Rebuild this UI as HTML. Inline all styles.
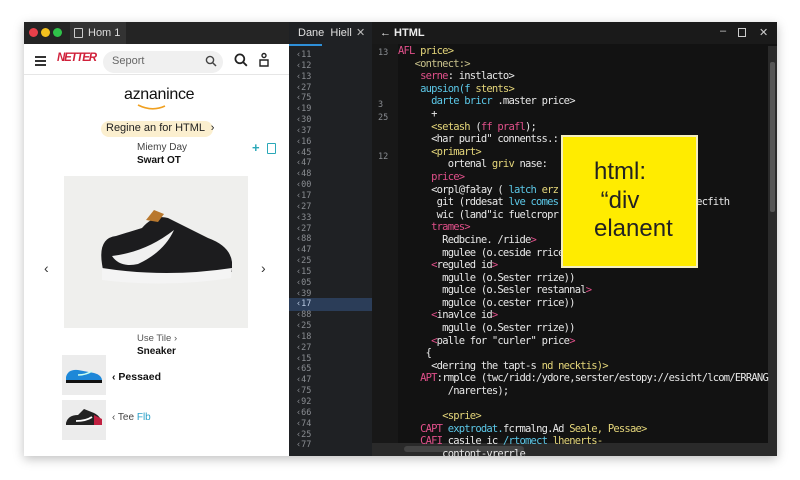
<!DOCTYPE html>
<html><head><meta charset="utf-8"><style>
*{margin:0;padding:0;box-sizing:border-box}
body{width:800px;height:480px;background:#fff;position:relative;overflow:hidden;font-family:"Liberation Sans",sans-serif}
.a{position:absolute;white-space:nowrap}
#win{position:absolute;left:24px;top:22px;width:753px;height:434px;background:#121212;box-shadow:0 3px 10px rgba(0,0,0,.25);overflow:hidden}
.code{font-family:"DejaVu Sans Mono","Liberation Mono",monospace;font-size:10.5px;letter-spacing:-0.8px;color:#e8e8e8}
.p{color:#e0508a}.y{color:#e5d67a}.b{color:#5cc8e8}.g{color:#c7c08a}
.ln{font-family:"DejaVu Sans Mono",monospace;font-size:8.5px;color:#8a8d92}
</style></head><body>
<div id="win">
 <div class="a" style="left:0;top:0;width:265px;height:22px;background:#242424"></div>
 <div class="a" style="left:5px;top:6px;width:9px;height:9px;border-radius:50%;background:#e8404a"></div>
 <div class="a" style="left:17px;top:6px;width:9px;height:9px;border-radius:50%;background:#f2c01e"></div>
 <div class="a" style="left:29px;top:6px;width:9px;height:9px;border-radius:50%;background:#2fc24a"></div>
 <div class="a" style="left:46px;top:0;width:56px;height:22px;background:#333"></div>
 <div class="a" style="left:50px;top:6px;width:9px;height:10px;border:1px solid #ccc;border-radius:1px"></div>
 <div class="a" style="left:64px;top:5px;font-size:11px;color:#ddd">Hom 1</div>
 <div class="a" style="left:0;top:22px;width:265px;height:412px;background:#fff"></div>
 <div class="a" style="left:0;top:52px;width:265px;height:1px;background:#e6e6e6"></div>
 <div class="a" style="left:11px;top:34px;width:11px;height:2px;background:#333;box-shadow:0 4px 0 #333,0 8px 0 #333"></div>
 <div class="a" style="left:33px;top:30px;font-size:11.5px;font-weight:bold;font-style:italic;color:#d0203a;letter-spacing:-1.2px">NETTER</div>
 <div class="a" style="left:79px;top:29px;width:120px;height:22px;border-radius:11px;background:#f0f0f0"></div>
 <div class="a" style="left:88px;top:33px;font-size:11px;color:#666">Seport</div>
 <svg class="a" style="left:181px;top:33px" width="12" height="12" viewBox="0 0 12 12"><circle cx="5" cy="5" r="3.6" fill="none" stroke="#444" stroke-width="1.4"/><path d="M7.6 7.6L11 11" stroke="#444" stroke-width="1.5"/></svg>
 <svg class="a" style="left:210px;top:31px" width="14" height="14" viewBox="0 0 12 12"><circle cx="5" cy="5" r="3.8" fill="none" stroke="#222" stroke-width="1.5"/><path d="M7.8 7.8L11 11" stroke="#222" stroke-width="1.6"/></svg>
 <svg class="a" style="left:234px;top:30px" width="12" height="15" viewBox="0 0 12 15"><circle cx="6" cy="3.5" r="2" fill="none" stroke="#222" stroke-width="1.4"/><path d="M2 14V8h8v6z" fill="none" stroke="#222" stroke-width="1.4"/></svg>
 <div class="a" style="left:100px;top:64px;font-size:16px;color:#111;letter-spacing:-.3px">aznanince</div>
 <svg class="a" style="left:113px;top:82px" width="30" height="7" viewBox="0 0 30 7"><path d="M1 1Q15 8 28 2" fill="none" stroke="#f0a020" stroke-width="1.6"/></svg>
 <div class="a" style="left:77px;top:99px;width:112px;height:16px;border-radius:8px;background:#fbefcf"></div>
 <div class="a" style="left:82px;top:100px;font-size:11px;color:#222">Regine an for HTML &nbsp;›</div>
 <div class="a" style="left:113px;top:120px;font-size:10px;color:#444">Miemy Day</div>
 <div class="a" style="left:113px;top:133px;font-size:10px;font-weight:bold;color:#111">Swart OT</div>
 <div class="a" style="left:228px;top:118px;font-size:13px;font-weight:bold;color:#2aa8b8">+</div>
 <div class="a" style="left:243px;top:121px;width:9px;height:11px;border:1.5px solid #2aa8b8;border-radius:1px"></div>
 <div class="a" style="left:40px;top:154px;width:184px;height:152px;background:#efefed"></div>
 <svg class="a" style="left:72px;top:186px" width="140" height="80" viewBox="0 0 140 80">
  <path d="M6 56 Q2 30 20 28 L46 20 Q58 6 72 10 Q92 20 112 30 Q134 38 136 54 L136 64 Q70 74 8 68 Z" fill="#1c1c1e"/>
  <path d="M50 12 L58 2 L68 6 L62 14Z" fill="#b8782e"/>
  <path d="M6 60 Q70 70 136 60 L135 70 Q70 80 6 72 Z" fill="#f4f4f4"/>
  <path d="M16 48 Q50 44 78 22 Q68 44 42 56 Q24 60 16 48Z" fill="#f0f0f0"/>
 </svg>
 <div class="a" style="left:20px;top:238px;font-size:14px;color:#333">‹</div>
 <div class="a" style="left:237px;top:238px;font-size:14px;color:#333">›</div>
 <div class="a" style="left:113px;top:311px;font-size:9.5px;color:#555">Use Tile ›</div>
 <div class="a" style="left:113px;top:324px;font-size:10px;font-weight:bold;color:#111">Sneaker</div>
 <div class="a" style="left:38px;top:333px;width:44px;height:40px;background:#ececec"></div>
 <svg class="a" style="left:40px;top:343px" width="40" height="20" viewBox="0 0 40 20"><path d="M2 12 Q4 4 14 5 L30 8 Q38 10 38 16 L2 16Z" fill="#1e88d8"/><path d="M2 15 L38 15 L38 18 L2 18Z" fill="#111"/><path d="M14 10 Q22 10 28 6" stroke="#cfe" stroke-width="1.5" fill="none"/></svg>
 <div class="a" style="left:88px;top:349px;font-size:10.5px;font-weight:bold;color:#111">‹ Pessaed</div>
 <div class="a" style="left:38px;top:378px;width:44px;height:40px;background:#ececec"></div>
 <svg class="a" style="left:40px;top:387px" width="40" height="22" viewBox="0 0 40 22"><path d="M2 14 Q4 6 14 6 L20 0 L30 4 Q38 8 38 16 L2 16Z" fill="#222"/><path d="M30 6 L38 10 L38 16 L30 16Z" fill="#c02040"/><path d="M2 16 L38 16 L38 19 L2 19Z" fill="#eee"/><path d="M12 12 Q22 12 28 8" stroke="#fff" stroke-width="1.8" fill="none"/></svg>
 <div class="a" style="left:88px;top:390px;font-size:10px;color:#444">‹ Tee <span style="color:#2aa0c8">Flb</span></div>
 <div class="a" style="left:265px;top:0;width:83px;height:434px;background:#1f2124"></div>
 <div class="a" style="left:274px;top:5px;font-size:11px;color:#e0e0e0">Dane &nbsp;Hiell</div>
 <div class="a" style="left:332px;top:4px;font-size:11px;color:#bbb">✕</div>
 <div class="a" style="left:265px;top:22px;width:33px;height:2px;background:#2e8fd8"></div>
 <div class="a" style="left:265px;top:276px;width:83px;height:13px;background:#2b3d58"></div>
 <div class="a ln" style="left:272px;top:28px;line-height:10.85px;white-space:pre">‹11
‹12
‹13
‹27
‹75
‹19
‹30
‹37
‹16
‹45
‹47
‹48
‹00
‹17
‹27
‹33
‹27
‹88
‹47
‹25
‹15
‹05
‹39
<span style="color:#b8c8e0">‹17</span>
‹88
‹25
‹18
‹27
‹15
‹65
‹47
‹75
‹92
‹66
‹74
‹25
‹77</div>
 <div class="a" style="left:348px;top:0;width:405px;height:22px;background:#1a1a1a"></div>
 <div class="a" style="left:356px;top:5px;font-size:11px;color:#eee;font-weight:bold">← HTML</div>
 <div class="a" style="left:696px;top:3px;font-size:11px;color:#ccc">–</div>
 <div class="a" style="left:714px;top:6px;width:8px;height:9px;border:1.3px solid #ccc"></div>
 <div class="a" style="left:735px;top:4px;font-size:11px;color:#ccc">✕</div>
 <div class="a" style="left:348px;top:22px;width:26px;height:400px;background:#181818"></div>
 <div class="a" style="left:744px;top:24px;width:9px;height:398px;background:#2a2a2a"></div>
 <div class="a" style="left:746px;top:40px;width:5px;height:150px;background:#555;border-radius:2px"></div>
 <div class="a" style="left:348px;top:421px;width:405px;height:13px;background:#2a2a2a"></div>
 <div class="a" style="left:380px;top:424px;width:120px;height:6px;background:#444;border-radius:3px"></div>
 <div class="a ln" style="left:354px;top:25px;line-height:13px;white-space:pre">13



3
25


12
























25
15</div>
 <div class="a code" style="left:374px;top:23px;line-height:12.6px;white-space:pre"><span class="y"><span class="p">AFL</span> price&gt;</span>
   <span class="g">&lt;ontnect:&gt;</span>
    <span class="p">serne</span>: instlacto&gt;
    <span class="b">aupsion(f</span> <span class="y">stents&gt;</span>
      <span class="b">darte bricr</span> .master price&gt;
      +
      <span class="y">&lt;setash</span> (<span class="p">ff prafl</span>);
      &lt;har purid" connentss.:
      <span class="y">&lt;primart&gt;</span>
         ortenal <span class="y">griv</span> nase:
      <span class="p">price&gt;</span>
      &lt;orpl@fałay ( <span class="b">latch</span> <span class="y">erz</span>
       git (rddesat <span class="b">lve comes</span>                  a /cpolecfith
       wic (land"ic fuelcropr
      <span class="p">trames&gt;</span>
        Redbcine. /riide<span class="p">&gt;</span>
        mgulee (o.ceside rrice
      <span class="p">&lt;</span>reguled id<span class="p">&gt;</span>
        mgulle (o.Sester rrize))
        mgulce (o.Sesler restannal<span class="p">&gt;</span>
        mgulce (o.cester rrice))
      <span class="p">&lt;</span>inavlce id<span class="p">&gt;</span>
        mgulle (o.Sester rrize))
      <span class="p">&lt;</span>palle for "curler" price<span class="p">&gt;</span>
     {
      &lt;derring the tapt-s <span class="y">nd necktis)&gt;</span>
    <span class="p">APT</span>:rmplce (twc/ridd:/ydore,serster/estopy://esicht/lcom/ERRANG
         /narertes);

        <span class="y">&lt;sprie&gt;</span>
    <span class="p">CAPT</span> <span class="b">exptrodat.</span>fcrmalng.Ad <span class="y">Seale, Pessae&gt;</span>
    <span class="p">CAFI</span> casile ic <span class="b">/rtomect</span> <span class="y">lhenerts-</span>
        contont-vrerrle</div>
 <div class="a" style="left:537px;top:113px;width:137px;height:133px;background:#ffec00;border:2px solid #f4eec0"></div>
 <div class="a" style="left:570px;top:136px;font-size:24px;color:#222;line-height:28.5px;white-space:pre">html:
 “div
elanent</div>
</div>
</body></html>
